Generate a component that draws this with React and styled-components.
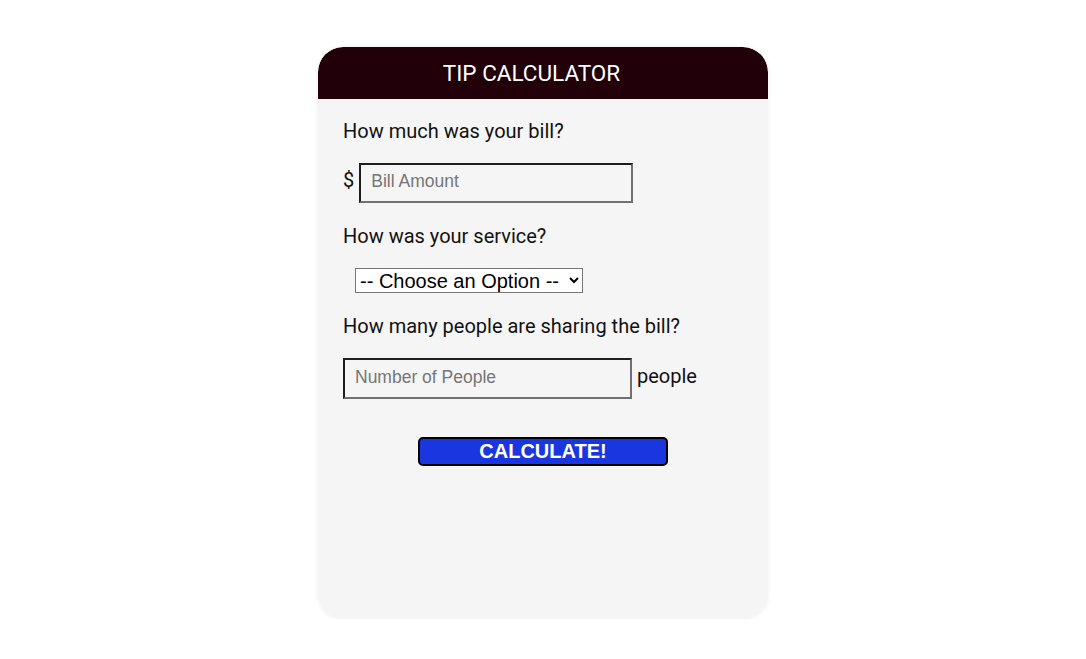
import React from "react";
import styled, { createGlobalStyle } from "styled-components";

const GlobalStyle = createGlobalStyle`
  body {
    margin: 0;
    background: #ffffff;
    font-family: "Roboto", "Liberation Sans", sans-serif;
  }
`;

const App = () => {
  return (
    <>
      <GlobalStyle />
      <Card>
        <Header>TIP CALCULATOR</Header>
        <Form onSubmit={(e) => e.preventDefault()}>
          <Label>How much was your bill?</Label>
          <Row>
            <Unit>$</Unit>
            <Field type="text" placeholder="Bill Amount" width="274px" />
          </Row>
          <Label>How was your service?</Label>
          <Select defaultValue="">
            <option value="">-- Choose an Option --</option>
            <option value="0.3">30% - Outstanding</option>
            <option value="0.2">20% - Good</option>
            <option value="0.15">15% - It was OK</option>
            <option value="0.1">10% - Bad</option>
            <option value="0.05">5% - Terrible</option>
          </Select>
          <Label>How many people are sharing the bill?</Label>
          <Row>
            <Field
              type="text"
              placeholder="Number of People"
              width="289px"
              tall
            />
            <Unit>people</Unit>
          </Row>
          <Button type="submit">CALCULATE!</Button>
        </Form>
      </Card>
    </>
  );
};

const Card = styled.div`
  width: 450px;
  height: 572px;
  margin: 47px auto 0;
  background: #f5f5f5;
  border-radius: 25px;
  box-shadow: 0 0 5px rgba(0, 0, 0, 0.07);
  overflow: hidden;
`;

const Header = styled.h1`
  margin: 0;
  height: 52px;
  padding-right: 23px;
  display: flex;
  align-items: center;
  justify-content: center;
  background: #210009;
  color: #ffffff;
  font-family: "Roboto", sans-serif;
  font-weight: 400;
  font-size: 22.5px;
  border-radius: 25px 25px 0 0;
`;

const Form = styled.form`
  display: flex;
  flex-direction: column;
  align-items: flex-start;
  padding: 0 25px;
`;

const Label = styled.p`
  margin: 21px 0 20px;
  font-family: "Roboto", sans-serif;
  font-size: 20px;
  color: #111111;
  &:first-child {
    margin-top: 20px;
  }
`;

const Row = styled.div`
  display: flex;
  align-items: baseline;
  gap: 5px;
`;

const Unit = styled.span`
  font-family: "Roboto", sans-serif;
  font-size: 20px;
  color: #111111;
`;

const Field = styled.input`
  box-sizing: border-box;
  width: ${(p) => p.width};
  height: ${(p) => (p.tall ? "41px" : "40px")};
  padding: 0 10px 3px;
  background: transparent;
  border-style: solid;
  border-width: 2px;
  border-color: #1e1e1e #707070 #707070 #1e1e1e;
  font-family: "Liberation Sans", Arial, sans-serif;
  font-size: 17.5px;
  color: #222222;
  outline: none;
  &::placeholder {
    color: #767676;
  }
`;

const Select = styled.select`
  margin-left: 12px;
  width: 228px;
  height: 25px;
  font-family: "Liberation Sans", Arial, sans-serif;
  font-size: 20px;
  color: #000000;
  background: #ffffff;
  border: 1px solid #767676;
  border-radius: 0;
`;

const Button = styled.button`
  align-self: center;
  width: 250px;
  height: 29px;
  margin-top: 38px;
  padding: 0;
  background: #1a36e0;
  color: #ffffff;
  border: 2px solid #000000;
  border-radius: 5px;
  font-family: "Liberation Sans", Arial, sans-serif;
  font-weight: 700;
  font-size: 20px;
  cursor: pointer;
`;

export default App;
